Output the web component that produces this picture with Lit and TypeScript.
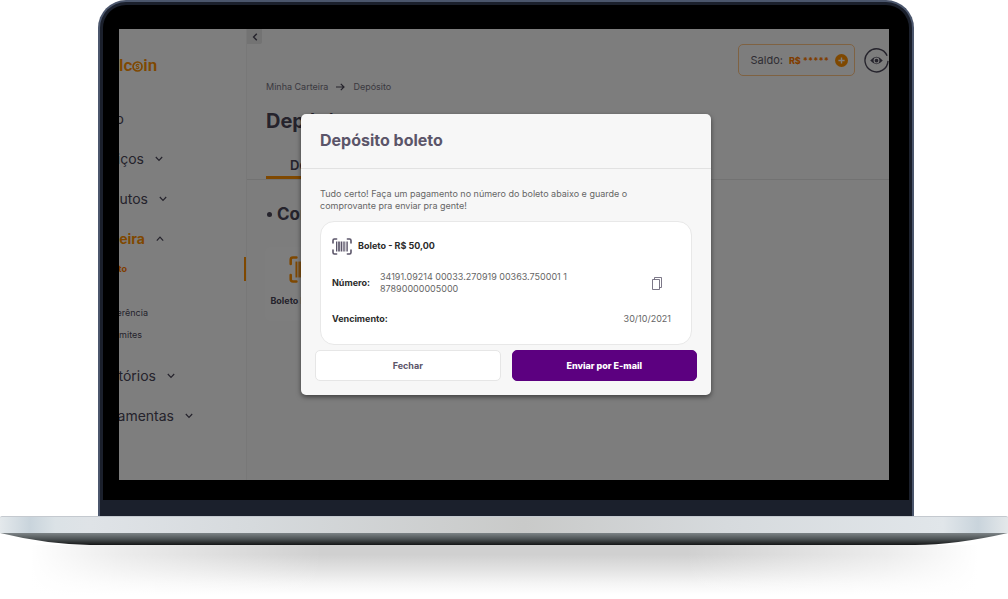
import { LitElement, html, css, svg, nothing } from "lit";
import { customElement, state } from "lit/decorators.js";

interface MenuItem {
  label: string;
  /** Visible width of the label, measured from the left edge of the display. */
  width: number;
  chevron?: "down" | "up";
  active?: boolean;
}

const barcode = svg`
  <g fill="none" stroke="currentColor" stroke-width="1.6" stroke-linecap="round" stroke-linejoin="round">
    <path d="M1 5V2.4Q1 1 2.4 1H4.6M15.4 1H17.6Q19 1 19 2.4V5M19 12V14.6Q19 16 17.6 16H15.4M4.6 16H2.4Q1 16 1 14.6V12"/>
  </g>
  <g fill="currentColor">
    <rect x="4" y="3.5" width="1.2" height="10"/>
    <rect x="5.8" y="3.5" width="2.6" height="10" opacity=".85"/>
    <rect x="9" y="3.5" width="1.2" height="10"/>
    <rect x="10.8" y="3.5" width="2.6" height="10" opacity=".7"/>
    <rect x="14.4" y="3.5" width="1.4" height="10"/>
  </g>`;

@customElement("side-menu")
export class SideMenu extends LitElement {
  static styles = css`
    :host { display: block; overflow: hidden; padding-top: 26px; border-right: 1px solid #f0f0f0; background: #fdfdfd; }
    .logo { display: flex; align-items: center; height: 20px; color: #ff9000; font: 600 17px/20px Roboto, sans-serif; }
    .logo svg { width: 11px; height: 11px; margin-top: 3px; }
    .menu { display: flex; flex-direction: column; gap: 20px; padding-top: 34px; }
    .item { display: flex; align-items: center; gap: 11px; line-height: 20px; font-size: 14px; color: #4a4658; text-decoration: none; }
    .label { display: flex; justify-content: flex-end; overflow: hidden; white-space: nowrap; }
    .item svg { width: 8px; height: 6px; }
    .active { color: #ff9000; font-weight: 700; }
    .active svg { color: #4a4658; }
    .group { display: flex; flex-direction: column; }
    .sub { font-size: 9px; line-height: 22px; }
    .current { margin: 8px 0 21px; line-height: 24px; color: #ff7a00; font-weight: 700; border-right: 2px solid #ff9000; }
  `;

  private link(item: MenuItem, extra = "") {
    return html`<a href="#" class="item ${extra} ${item.active ? "active" : ""}">
      <span class="label" style="width:${item.width}px">${item.label}</span>
      ${item.chevron
        ? html`<svg viewBox="0 0 8 6" fill="none" stroke="currentColor" stroke-width="1.2" aria-hidden="true">
            <path d=${item.chevron === "down" ? "M.8 1 4 4.4 7.2 1" : "M.8 4.6 4 1.2 7.2 4.6"} />
          </svg>`
        : nothing}
    </a>`;
  }

  render() {
    return html`
      <div class="logo">
        <span>lc</span>
        <svg viewBox="0 0 11 11" fill="none" stroke="currentColor" aria-hidden="true">
          <circle cx="5.5" cy="5.5" r="4.5" stroke-width="1.7" />
          <path stroke-width="1.1" d="M7.2 3.9Q5.4 2.9 4.4 3.8T5.5 5.5 6.6 7.2 3.8 7.1" />
        </svg>
        <span>in</span>
      </div>
      <nav class="menu">
        ${this.link({ label: "Início", width: 5 })}
        ${this.link({ label: "Serviços", width: 25, chevron: "down" })}
        ${this.link({ label: "Produtos", width: 29, chevron: "down" })}
        <div class="group">
          ${this.link({ label: "Carteira", width: 26, chevron: "up", active: true })}
          ${this.link({ label: "Depósito", width: 8 }, "sub current")}
          ${this.link({ label: "Transferência", width: 29 }, "sub")}
          ${this.link({ label: "Limites", width: 23 }, "sub")}
        </div>
        ${this.link({ label: "Relatórios", width: 37, chevron: "down" })}
        ${this.link({ label: "Ferramentas", width: 55, chevron: "down" })}
      </nav>
    `;
  }
}

@customElement("wallet-page")
export class WalletPage extends LitElement {
  static styles = css`
    :host { display: block; position: relative; overflow: hidden; background: #fafafa; color: #4a4658; }
    button { font: inherit; color: inherit; border: 0; padding: 0; background: none; }
    .collapse { position: absolute; left: 0; top: 0; display: grid; place-items: center; width: 15px; height: 15px; background: #e6e6e6; border-radius: 0 0 2px 0; }
    .collapse svg { width: 6px; height: 8px; }
    .top { display: flex; justify-content: flex-end; align-items: center; gap: 9px; padding-top: 15px; }
    .balance { display: flex; align-items: center; gap: 6px; box-sizing: border-box; height: 32px; padding: 0 6px 0 12px; border: 1px solid #ffc485; border-radius: 5px; font-size: 11px; color: #5f5b69; }
    .amount { color: #ff7a00; font-size: 9px; font-weight: 800; white-space: nowrap; }
    .plus { display: block; width: 13px; height: 13px; }
    .plus svg, .eye svg { display: block; width: 100%; height: 100%; }
    .eye { width: 25px; height: 25px; }
    .crumbs { display: flex; align-items: center; gap: 8px; margin: 5px 0 0 19px; font-size: 9px; line-height: 12px; color: #77737f; }
    .crumbs a { color: inherit; text-decoration: none; }
    .crumbs svg { width: 9px; height: 8px; color: #4a4658; }
    h1 { margin: 15px 0 0 19px; font-size: 20px; line-height: 26px; }
    .tabs { display: flex; margin-top: 23px; padding-left: 19px; border-bottom: 1px solid #e4e4e4; }
    .tab { padding: 0 24px 3px; font-size: 13px; line-height: 16px; font-weight: 600; border-bottom: 3px solid #ff9000; }
    h2 { display: flex; align-items: center; gap: 5px; margin: 24px 0 0 20px; font-size: 17px; line-height: 20px; }
    h2::before { content: ""; width: 5px; height: 5px; border-radius: 50%; background: currentColor; }
    .option { display: flex; flex-direction: column; align-items: center; gap: 12px; width: 80px; margin: 23px 0 0 18px; padding: 9px 0 14px; border-radius: 6px; background: #fdfdfd; font-size: 9px; line-height: 12px; font-weight: 700; white-space: nowrap; }
    .option svg { width: 32px; height: 27px; color: #ff9000; }
  `;

  render() {
    return html`
      <button class="collapse" aria-label="Recolher menu">
        <svg viewBox="0 0 6 8" fill="none" stroke="currentColor" stroke-width="1.4"><path d="M4.8.8 1.6 4 4.8 7.2" /></svg>
      </button>
      <div class="top">
        <div class="balance">
          <span>Saldo:</span><span class="amount">R$ *****</span>
          <button class="plus" aria-label="Adicionar saldo">
            <svg viewBox="0 0 13 13"><circle cx="6.5" cy="6.5" r="6.5" fill="#ff9000" /><path d="M6.5 3.4V9.6M3.4 6.5H9.6" stroke="#fff" stroke-width="1.4" /></svg>
          </button>
        </div>
        <button class="eye" aria-label="Mostrar saldo">
          <svg viewBox="0 0 26 26" fill="none">
            <path d="M24 8A12 12 0 1 0 25 13.4" stroke="#4a4658" stroke-width="1.4" />
            <path d="M6.5 13Q13 5.4 19.5 13 13 20.6 6.5 13Z" fill="#4a4658" />
            <circle cx="13" cy="13" r="2.5" stroke="#fafafa" stroke-width="1.1" />
          </svg>
        </button>
      </div>
      <nav class="crumbs">
        <a href="#">Minha Carteira</a>
        <svg viewBox="0 0 9 8" fill="none" stroke="currentColor" stroke-width="1.2" aria-hidden="true"><path d="M0 4H8M4.8.8 8 4 4.8 7.2" /></svg>
        <a href="#">Depósito</a>
      </nav>
      <h1>Depósito</h1>
      <div class="tabs"><button class="tab">Depositar</button></div>
      <h2>Como depositar</h2>
      <button class="option"><svg viewBox="0 0 20 17" aria-hidden="true">${barcode}</svg>Boleto Bancário</button>
    `;
  }
}

@customElement("deposit-dialog")
export class DepositDialog extends LitElement {
  static styles = css`
    :host { display: block; width: 410px; border-radius: 5px; background: #f7f7f7; box-shadow: 0 2px 5px rgba(0, 0, 0, 0.5); color: #666; font-size: 9px; line-height: 12px; }
    .title { margin: 0; padding: 0 19px 2px; border-bottom: 1px solid #e2e2e2; color: #5b5569; font-size: 16px; line-height: 52px; font-weight: 700; }
    .intro { margin: 0; padding: 19px 40px 9px 19px; }
    .card { margin: 0 19px; padding: 14px 20px 19px 11px; border: 1px solid #e8e8e8; border-radius: 14px; background: #fff; }
    .head { display: flex; align-items: center; gap: 6px; height: 20px; }
    .head svg { width: 20px; height: 17px; color: #5b5569; }
    .strong { color: #2b2b2b; font-weight: 700; }
    .row { display: flex; align-items: center; justify-content: space-between; margin: 0; }
    .number { margin-top: 15px; gap: 10px; }
    .date { margin-top: 18px; }
    .value { margin: 0; }
    .digits { flex: 1; }
    .code { display: block; max-width: 200px; }
    .copy { display: block; width: 10px; height: 13px; margin-right: 9px; padding: 0; border: 0; background: none; color: #5b5569; }
    .copy svg { display: block; }
    .actions { display: grid; grid-template-columns: 1fr 1fr; gap: 11px; padding: 5px 14px 14px; }
    .btn { height: 31px; border: 1px solid #e6e6e6; border-radius: 5px; background: #fff; color: #5b5569; font: inherit; font-weight: 700; }
    .primary { border-color: #5c0080; background: #5c0080; color: #fff; font-weight: 800; }
  `;

  private close() {
    this.dispatchEvent(new CustomEvent("dialog-close"));
  }

  render() {
    return html`
      <h2 class="title">Depósito boleto</h2>
      <p class="intro">Tudo certo! Faça um pagamento no número do boleto abaixo e guarde o comprovante pra enviar pra gente!</p>
      <div class="card">
        <div class="head"><svg viewBox="0 0 20 17" aria-hidden="true">${barcode}</svg><span class="strong">Boleto - R$ 50,00</span></div>
        <dl class="row number">
          <dt class="strong">Número:</dt>
          <dd class="value digits"><span class="code">34191.09214 00033.270919 00363.750001 1 87890000005000</span></dd>
          <button class="copy" aria-label="Copiar número">
            <svg width="10" height="13" viewBox="0 0 10 13" fill="none" stroke="currentColor" stroke-width=".8"><path d="M.5 2.5H7.5V12.5H.5ZM2.5 2.5V.5H9.5V10.5H7.5" /></svg>
          </button>
        </dl>
        <dl class="row date"><dt class="strong">Vencimento:</dt><dd class="value">30/10/2021</dd></dl>
      </div>
      <div class="actions">
        <button class="btn" @click=${this.close}>Fechar</button>
        <button class="btn primary">Enviar por E-mail</button>
      </div>
    `;
  }
}

@customElement("app-root")
export class AppRoot extends LitElement {
  @state() private open = true;

  static styles = css`
    :host { display: block; min-height: 100vh; overflow: hidden; background: #fff; font-family: Inter, sans-serif; }
    .lid { margin: 0 94px 0 98px; border: 2px solid #4b566c; border-bottom: 0; border-radius: 28px 28px 0 0; background: #1b202c; padding: 3px 3px 16px; }
    .bezel { padding: 24px 20px 20px 16px; border-radius: 23px 23px 0 0; background: #000; }
    .screen { position: relative; display: grid; grid-template-columns: 128px 1fr; aspect-ratio: 770 / 451; overflow: hidden; }
    .overlay { position: absolute; inset: 0; display: grid; place-items: center; padding-left: 4px; background: rgba(0, 0, 0, 0.5); }
    .deck { height: 17px; box-sizing: border-box; border-top: 1px solid #c4c9cf; border-radius: 2px 2px 0 0;
      background: linear-gradient(90deg, #e4e9ec 0, #c9d4dc 30px, #dbe2e6 55px, #dfe3e7 90px, #d6dadd 25%, #c9cac9 52%, #d6dadd 72%, #e1e6ea calc(100% - 65px), #c9d4dc calc(100% - 30px), #e4e8ea 100%); }
    .under { display: block; width: 100%; height: 12px; }
    .shadow { height: 54px; background:
      linear-gradient(90deg, #fff 3%, rgba(255, 255, 255, 0.6) 12%, rgba(255, 255, 255, 0) 32%, rgba(255, 255, 255, 0) 68%, rgba(255, 255, 255, 0.6) 88%, #fff 97%),
      linear-gradient(#d0d0d0 0, #d0d0d0 18%, #e2e2e2 45%, #f4f4f4 70%, #fff 92%); }
  `;

  render() {
    return html`
      <div class="lid">
        <div class="bezel">
          <div class="screen">
            <side-menu></side-menu>
            <wallet-page></wallet-page>
            ${this.open
              ? html`<div class="overlay">
                  <deposit-dialog role="dialog" aria-label="Depósito boleto" @dialog-close=${() => (this.open = false)}></deposit-dialog>
                </div>`
              : nothing}
          </div>
        </div>
      </div>
      <div class="deck"></div>
      <svg class="under" viewBox="0 0 1008 12" preserveAspectRatio="none" aria-hidden="true">
        <defs>
          <linearGradient id="steel" x2="0" y2="1">
            <stop offset="0" stop-color="#7d8487" /><stop offset=".5" stop-color="#4d5355" /><stop offset="1" stop-color="#131415" />
          </linearGradient>
        </defs>
        <path d="M0 0H1008Q955 12 915 12H90Q45 11 0 0Z" fill="url(#steel)" />
      </svg>
      <div class="shadow"></div>
    `;
  }
}
